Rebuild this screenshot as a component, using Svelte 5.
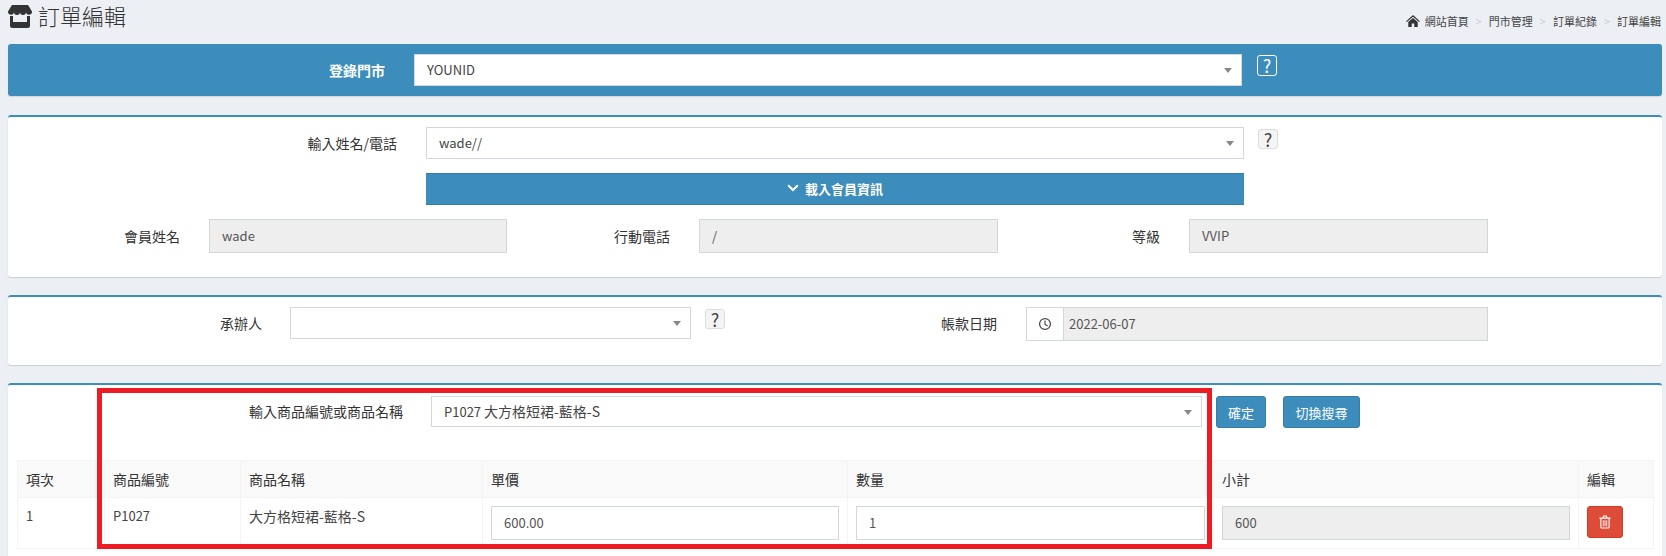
<script>
  const crumbs = ['門市管理', '訂單紀錄', '訂單編輯'];
</script>

<div class="page">
  <header class="top">
    <h1>
      <svg class="store" viewBox="0 0 24 24" aria-hidden="true">
        <path fill="#333" d="M4.500 1h15a1 1 0 0 1 .9.5L24 7.500a3 3 0 0 1-6 .6 3 3 0 0 1-6 0 3 3 0 0 1-6 0 3 3 0 0 1-6-.6L3.600 1.500A1 1 0 0 1 4.500 1z" />
        <path fill="#333" d="M2 12h3v6h14v-6h3v9.500a2.500 2.500 0 0 1-2.500 2.500h-15A2.500 2.500 0 0 1 2 21.500z" />
      </svg>
      <span>訂單編輯</span>
    </h1>
    <ol class="crumbs">
      <li class="home">
        <svg viewBox="0 0 16 14" aria-hidden="true">
          <path fill="#333" d="M8 0l8 7.200-.9 1L8 2 .9 8.200 0 7.200zM2.500 8.200L8 3.400l5.500 4.800V14H9.500V10h-3v4h-4z" />
        </svg>
        網站首頁
      </li>
      {#each crumbs as crumb}
        <li class="sep">&gt;</li>
        <li>{crumb}</li>
      {/each}
    </ol>
  </header>

  <section class="store-bar">
    <span class="label">登錄門市</span>
    <div class="select">YOUNID<i class="caret"></i></div>
    <span class="help outline">?</span>
  </section>

  <section class="card member">
    <div class="member-search">
      <span class="label">輸入姓名/電話</span>
      <div class="select">wade//<i class="caret"></i></div>
      <span class="help">?</span>
    </div>
    <button class="load" type="button">
      <svg viewBox="0 0 12 8" aria-hidden="true">
        <path d="M1.200 1.200L6 6l4.800-4.800" fill="none" stroke="#fff" stroke-width="2" />
      </svg>
      載入會員資訊
    </button>
    <div class="member-info">
      <span class="label">會員姓名</span>
      <div class="input off">wade</div>
      <span class="label">行動電話</span>
      <div class="input off">/</div>
      <span class="label">等級</span>
      <div class="input off">VVIP</div>
    </div>
  </section>

  <section class="card handler">
    <span class="label">承辦人</span>
    <div class="select"><i class="caret"></i></div>
    <span class="help">?</span>
    <span class="label">帳款日期</span>
    <div class="date">
      <span class="addon">
        <svg viewBox="0 0 16 16" aria-hidden="true">
          <circle cx="8" cy="8" r="6.200" fill="none" stroke="#444" stroke-width="1.400" />
          <path d="M8 4v4.500l3 1.800" fill="none" stroke="#444" stroke-width="1.300" />
        </svg>
      </span>
      <div class="input off">2022-06-07</div>
    </div>
  </section>

  <section class="card products">
    <div class="product-search">
      <span class="label">輸入商品編號或商品名稱</span>
      <div class="select">P1027 <span class="zh">大方格短裙-藍格-S</span><i class="caret"></i></div>
      <button class="btn confirm" type="button">確定</button>
      <button class="btn switch" type="button">切換搜尋</button>
    </div>

    <table>
      <colgroup>
        <col style="width: 87px" />
        <col style="width: 136px" />
        <col style="width: 242px" />
        <col style="width: 365px" />
        <col style="width: 366px" />
        <col style="width: 365px" />
        <col style="width: 75px" />
      </colgroup>
      <thead>
        <tr>
          <th>項次</th>
          <th>商品編號</th>
          <th>商品名稱</th>
          <th>單價</th>
          <th>數量</th>
          <th>小計</th>
          <th>編輯</th>
        </tr>
      </thead>
      <tbody>
        <tr>
          <td>1</td>
          <td>P1027</td>
          <td class="zh">大方格短裙-藍格-S</td>
          <td><div class="input">600.00</div></td>
          <td><div class="input">1</div></td>
          <td><div class="input off">600</div></td>
          <td>
            <button class="trash" type="button" aria-label="刪除">
              <svg viewBox="0 0 14 16" aria-hidden="true">
                <path fill="none" stroke="#fff" stroke-width="1.300" d="M.5 3.500h13M4.500 3.500l1-2.500h3l1 2.500M2.200 3.500v10.300q0 1.200 1.200 1.200h7.200q1.200 0 1.200-1.200V3.500" />
                <path stroke="#fff" stroke-width="1" d="M5 6v7M7 6v7M9 6v7" />
              </svg>
            </button>
          </td>
        </tr>
      </tbody>
    </table>

    <div class="highlight"></div>
  </section>
</div>

<style>
  :global(html), :global(body) {
    margin: 0;
    height: 100%;
    overflow: hidden;
    background: #ecf0f5;
  }

  * {
    box-sizing: border-box;
  }

  .page {
    height: 556px;
    overflow: hidden;
    padding: 0 4px 0 8px;
    font-family: "Noto Sans CJK TC", "Noto Sans", sans-serif;
    font-size: 13px;
    color: #333;
  }

  .zh {
    font-size: 14px;
  }

  .top {
    height: 44px;
    display: flex;
    justify-content: space-between;
  }

  h1 {
    margin: 0;
    height: 30px;
    display: flex;
    align-items: center;
    gap: 6px;
    font-size: 22px;
    font-weight: 300;
    line-height: 1;
  }

  .store {
    width: 24px;
    height: 24px;
    margin-top: 2px;
  }

  .crumbs {
    list-style: none;
    margin: 0;
    padding: 13px 1px 0 0;
    display: flex;
    gap: 7px;
    font-size: 11px;
    line-height: 16px;
    color: #444;
  }

  .crumbs .home svg {
    width: 14px;
    height: 12px;
    margin-right: 2px;
    vertical-align: -1px;
  }

  .sep {
    color: #ccc;
  }

  .label {
    font-size: 14px;
    text-align: right;
    white-space: nowrap;
  }

  .select {
    position: relative;
    height: 32px;
    line-height: 30px;
    padding-left: 12px;
    background: #fff;
    border: 1px solid #d2d6de;
    color: #444;
  }

  .caret {
    position: absolute;
    right: 9px;
    top: 13px;
    border: 4px solid transparent;
    border-top: 5px solid #888;
    border-bottom: 0;
  }

  .help {
    width: 20px;
    height: 20px;
    display: block;
    font-size: 18px;
    line-height: 19px;
    text-align: center;
    background: #f4f4f4;
    border: 1px solid #ddd;
    border-radius: 3px;
    color: #444;
  }

  .help.outline {
    height: 21px;
    background: transparent;
    border-color: #fff;
    color: #fff;
  }

  .input {
    height: 34px;
    line-height: 32px;
    padding-left: 12px;
    background: #fff;
    border: 1px solid #d2d6de;
    color: #555;
  }

  .input.off {
    background: #eee;
  }

  /* store selector */
  .store-bar {
    height: 52px;
    margin-bottom: 19px;
    padding-top: 10px;
    display: grid;
    grid-template-columns: 391px 828px 20px;
    column-gap: 15px;
    align-items: start;
    background: #3c8dbc;
    border-radius: 3px;
    box-shadow: 0 1px 1px rgba(0, 0, 0, 0.1);
  }

  .store-bar .label {
    color: #fff;
    font-weight: 700;
    line-height: 32px;
    padding-right: 14px;
  }

  .store-bar .help {
    margin-top: 1px;
  }

  .card {
    background: #fff;
    border-top: 2px solid #3c8dbc;
    border-radius: 3px;
    box-shadow: 0 1px 1px rgba(0, 0, 0, 0.15);
  }

  /* member */
  .member {
    height: 162px;
    margin-bottom: 18px;
    padding-top: 10px;
  }

  .member-search {
    display: grid;
    grid-template-columns: 418px 818px 34px;
    align-items: start;
    height: 46px;
  }

  .member-search .label {
    line-height: 32px;
    padding-right: 29px;
  }

  .member-search .help {
    margin: 2px 0 0 14px;
  }

  .load {
    display: flex;
    align-items: center;
    justify-content: center;
    gap: 6px;
    width: 818px;
    height: 32px;
    margin: 0 0 14px 418px;
    padding: 0 0 2px;
    font: inherit;
    font-weight: 700;
    color: #fff;
    background: #3c8dbc;
    border: 1px solid #367fa9;
    border-width: 1px 0;
  }

  .load svg {
    width: 12px;
    height: 8px;
  }

  .member-info {
    display: grid;
    grid-template-columns: 201px 298px 192px 299px 191px 299px;
    align-items: center;
  }

  .member-info .label {
    padding-right: 29px;
  }

  /* handler and date */
  .handler {
    height: 70px;
    margin-bottom: 18px;
    padding-top: 10px;
    display: grid;
    grid-template-columns: 282px 401px 34px 272px 491px;
    align-items: start;
  }

  .handler .label {
    line-height: 32px;
  }

  .handler > .label:first-child {
    padding-right: 28px;
  }

  .handler .help {
    margin: 2px 0 0 14px;
  }

  .date {
    display: flex;
    margin-left: 29px;
  }

  .addon {
    flex: none;
    width: 37px;
    height: 34px;
    display: flex;
    align-items: center;
    justify-content: center;
    border: 1px solid #d2d6de;
    border-right: 0;
  }

  .addon svg {
    width: 14px;
    height: 14px;
  }

  .date .input {
    flex: 1;
    padding-left: 5px;
  }

  /* products */
  .products {
    position: relative;
    height: 200px;
    padding-top: 11px;
  }

  .product-search {
    display: flex;
    align-items: flex-start;
    height: 64px;
    padding-left: 241px;
  }

  .product-search .label {
    width: 154px;
    line-height: 31px;
  }

  .product-search .select {
    width: 771px;
    margin-left: 28px;
    height: 31px;
    line-height: 29px;
  }

  .btn {
    height: 32px;
    padding: 0;
    font: inherit;
    color: #fff;
    background: #3c8dbc;
    border: 1px solid #367fa9;
    border-radius: 3px;
  }

  .confirm {
    width: 50px;
    margin-left: 14px;
  }

  .switch {
    width: 77px;
    margin-left: 17px;
  }

  table {
    width: 1636px;
    margin-left: 9px;
    table-layout: fixed;
    border-collapse: collapse;
    border: 1px solid #f4f4f4;
  }

  th, td {
    border: 1px solid #f4f4f4;
    padding: 8px;
    text-align: left;
    vertical-align: top;
    font-weight: 400;
    line-height: 20px;
    color: #444;
  }

  th {
    height: 36px;
    background: #f9f9f9;
    font-size: 14px;
    color: #333;
  }

  td {
    height: 50px;
  }

  td.zh {
    font-size: 14px;
  }

  .trash {
    display: flex;
    align-items: center;
    justify-content: center;
    width: 36px;
    height: 32px;
    padding: 0;
    background: #dd4b39;
    border: 1px solid #d73925;
    border-radius: 3px;
  }

  .trash svg {
    width: 12px;
    height: 14px;
  }

  .highlight {
    position: absolute;
    left: 89px;
    top: 3px;
    width: 1115px;
    height: 161px;
    border: 5px solid #ed1c24;
    pointer-events: none;
  }
</style>
